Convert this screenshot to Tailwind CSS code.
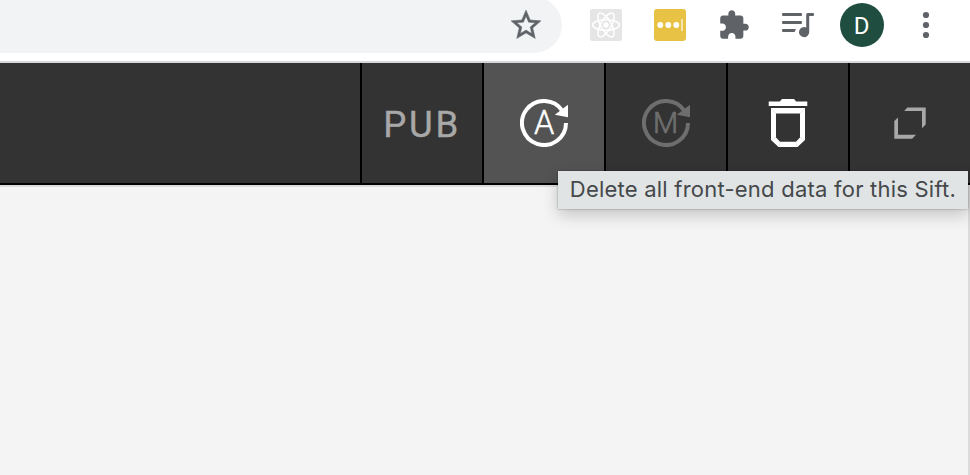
<!DOCTYPE html>
<html lang="en">
<head>
<meta charset="utf-8">
<title>Sift toolbar</title>
<script src="https://cdn.jsdelivr.net/npm/@tailwindcss/browser@4"></script>
</head>
<body class="h-[475px] w-[970px] overflow-hidden bg-[#f4f4f4] font-['Inter',sans-serif]">
<div class="relative flex h-[475px] flex-col">
  <header class="flex h-[63px] shrink-0 border-b-2 border-[#d6d8dc] bg-white">
    <div class="-mt-[3px] flex h-14 w-[562px] shrink-0 justify-end rounded-r-full bg-[#f1f3f4] pt-[10px] pr-[18px]">
      <svg class="size-[36px]" viewBox="0 0 24 24" fill="#5f6368" stroke="#5f6368" stroke-width=".3"><path d="M22 9.24l-7.19-.62L12 2 9.19 8.63 2 9.24l5.46 4.73L5.82 21 12 17.27 18.18 21l-1.63-7.03L22 9.24zM12 15.4l-3.76 2.27 1-4.28-3.32-2.88 4.38-.38L12 6.1l1.71 4.04 4.38.38-3.32 2.88 1 4.28L12 15.4z"/></svg>
    </div>
    <div class="flex h-[50px] items-center pl-7">
      <svg class="size-8 rounded-[2px] bg-[#e5e5e5]" viewBox="0 0 32 32" fill="none" stroke="white" stroke-width="1.5"><circle cx="16" cy="16" r="2.7" fill="white" stroke="none"/><ellipse cx="16" cy="16" rx="13.4" ry="5.2"/><ellipse cx="16" cy="16" rx="13.4" ry="5.2" transform="rotate(60 16 16)"/><ellipse cx="16" cy="16" rx="13.4" ry="5.2" transform="rotate(120 16 16)"/></svg>
      <svg class="ml-8 size-8 rounded-[3px] bg-[#e8c244]" viewBox="0 0 32 32" fill="white"><circle cx="6.3" cy="16" r="2.9"/><circle cx="14.3" cy="16" r="2.9"/><circle cx="22.3" cy="16" r="2.9"/><path d="M27.2 10h1.6v12h-1.6z" fill="#f8edca"/></svg>
      <svg class="ml-[32px] h-[32px] w-8" viewBox="0 0 32 32" fill="#5f6368"><g transform="translate(-.5 -.2) scale(1.36)"><path d="M20.5 11H19V7c0-1.1-.9-2-2-2h-4V3.5C13 2.12 11.88 1 10.5 1S8 2.12 8 3.5V5H4c-1.1 0-1.99.9-1.99 2v3.8H3.5c1.49 0 2.7 1.21 2.7 2.7s-1.21 2.7-2.7 2.7H2V20c0 1.1.9 2 2 2h3.8v-1.5c0-1.49 1.21-2.7 2.7-2.7s2.7 1.21 2.7 2.7V22H17c1.1 0 2-.9 2-2v-4h1.5c1.38 0 2.5-1.12 2.5-2.5S21.88 11 20.5 11z"/></g></svg>
      <svg class="ml-[32px] h-8 w-8" viewBox="0 0 32 32" fill="#5f6368"><rect y="4" width="20" height="3" rx="1"/><rect y="12" width="20" height="3" rx="1"/><path d="M1 20h13l-1.5 3H1a1 1 0 0 1-1-1v-1a1 1 0 0 1 1-1z"/><path d="M24.2 5.5a1.5 1.5 0 0 1 1.5-1.5H31a1 1 0 0 1 1 1v1a1 1 0 0 1-1 1h-3.8v16.2a5.1 5.1 0 1 1-3-4.8z"/></svg>
      <div class="ml-[26px] flex size-11 items-center justify-center rounded-full bg-[#1f4e40] pt-px pr-px font-['Roboto',sans-serif] text-[24px] leading-none text-white">D</div>
      <svg class="ml-[38px] h-8 w-2" viewBox="0 0 8 32" fill="#5f6368"><circle cx="4" cy="6" r="3.1"/><circle cx="4" cy="16" r="3.1"/><circle cx="4" cy="26" r="3.1"/></svg>
    </div>
  </header>
  <nav class="flex h-[122px] shrink-0 border-b-2 border-black bg-[#333]">
    <div class="w-[360px]"></div>
    <button class="flex w-[122px] items-center justify-center border-l-2 border-black">
      <svg class="h-[60px] w-[100px]" viewBox="-10 -13 100 60" fill="#a8a8a8" font-family="Roboto, sans-serif" font-size="36.5"><text x="1.2" y="31" stroke="#a8a8a8" stroke-width=".4" textLength="75" lengthAdjust="spacing">PUB</text></svg>
    </button>
    <button class="flex w-[122px] items-center justify-center border-l-2 border-black bg-[#535353]">
      <svg class="size-12" viewBox="0 0 48 48" fill="white"><path d="M46 24A22 22 0 1 1 42.2 11.6" fill="none" stroke="white" stroke-width="4"/><path d="M48 5.7v12.6l-13.2-2.6z"/><text x="24.2" y="35" text-anchor="middle" font-family="Roboto, sans-serif" font-weight="300" font-size="32.5" stroke="white" stroke-width=".4">A</text></svg>
    </button>
    <button class="flex w-[122px] items-center justify-center border-l-2 border-black">
      <svg class="size-12" viewBox="0 0 48 48" fill="#6e6e6e"><path d="M46 24A22 22 0 1 1 42.2 11.6" fill="none" stroke="#6e6e6e" stroke-width="4"/><path d="M48 5.7v12.6l-13.2-2.6z"/><text x="23.5" y="34.3" text-anchor="middle" font-family="Roboto, sans-serif" font-weight="300" font-size="29" stroke="#6e6e6e" stroke-width=".7">M</text></svg>
    </button>
    <button class="flex w-[122px] items-center justify-center border-l-2 border-black">
      <svg class="h-12 w-10" viewBox="0 0 40 48" fill="white"><path d="M.7 2.5h11.1L14 0h12l2.2 2.5h11.1V7H.7z"/><path fill-rule="evenodd" d="M3 9h34v32l-7.5 7h-19L3 41zm5 5.5v24l4 4.2h16l4-4.2v-24z"/><path d="M3.5 9.5l4.5 5M36.5 9.5l-4.5 5M4 40.5l4-2M36 40.5l-4-2M10.8 47l1.7-4.2M29.2 47l-1.7-4.2" stroke="#d0d0d0" stroke-width=".5"/></svg>
    </button>
    <button class="flex w-[122px] shrink-0 items-center justify-center border-l-2 border-black">
      <svg class="size-8" viewBox="0 0 32 32" fill="#a8a8a8"><path d="M13.3.4h18.4v17.1L28 21.3V4H10.2z"/><path d="M.3 14.1l3.7-3.7v17.4h18l-3.8 3.9H.3z"/></svg>
    </button>
  </nav>
  <main class="w-[970px] grow border-t-2 border-r-2 border-[#dbdbdb] bg-[#f4f4f4]"></main>
  <div class="absolute top-[171px] left-[558px] flex h-[38px] w-[410px] items-center bg-[#e0e4e5] pl-[12px] shadow-[0_6px_16px_rgba(0,0,0,0.2),0_0_2px_rgba(0,0,0,0.35)]">
    <svg class="h-[38px] w-[396px]" viewBox="0 0 396 38" fill="#45484a"><text x="-.2" y="26" font-family="Inter, sans-serif" font-size="22" textLength="386" lengthAdjust="spacing">Delete all front-end data for this Sift.</text></svg>
  </div>
</div>
</body>
</html>
